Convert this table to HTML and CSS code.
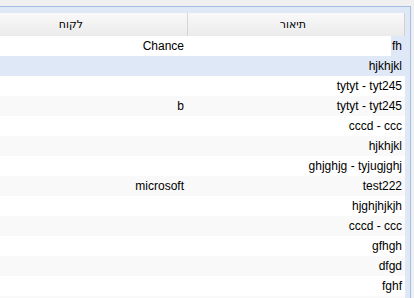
FILE: index.html
```html
<!DOCTYPE html>
<html lang="he">
<head>
<meta charset="utf-8">
<link rel="stylesheet" href="styles.css">
</head>
<body>
<div class="panel">
  <div class="grid" dir="rtl">
    <div class="hcell hdesc">תיאור</div>
    <div class="hcell hcust">לקוח</div>

    <div class="row">
      <div class="cell desc focus"><span class="focus-text">fh</span></div>
      <div class="cell cust">Chance</div>
    </div>
    <div class="row selected">
      <div class="cell desc">hjkhjkl</div>
      <div class="cell cust"></div>
    </div>
    <div class="row">
      <div class="cell desc">tytyt - tyt245</div>
      <div class="cell cust"></div>
    </div>
    <div class="row alt">
      <div class="cell desc">tytyt - tyt245</div>
      <div class="cell cust">b</div>
    </div>
    <div class="row">
      <div class="cell desc">cccd - ccc</div>
      <div class="cell cust"></div>
    </div>
    <div class="row alt">
      <div class="cell desc">hjkhjkl</div>
      <div class="cell cust"></div>
    </div>
    <div class="row">
      <div class="cell desc">ghjghjg - tyjugjghj</div>
      <div class="cell cust"></div>
    </div>
    <div class="row alt">
      <div class="cell desc">test222</div>
      <div class="cell cust">microsoft</div>
    </div>
    <div class="row">
      <div class="cell desc">hjghjhjkjh</div>
      <div class="cell cust"></div>
    </div>
    <div class="row alt">
      <div class="cell desc">cccd - ccc</div>
      <div class="cell cust"></div>
    </div>
    <div class="row">
      <div class="cell desc">gfhgh</div>
      <div class="cell cust"></div>
    </div>
    <div class="row alt">
      <div class="cell desc">dfgd</div>
      <div class="cell cust"></div>
    </div>
    <div class="row">
      <div class="cell desc">fghf</div>
      <div class="cell cust"></div>
    </div>
    <div class="row alt">
      <div class="cell desc"></div>
      <div class="cell cust"></div>
    </div>
  </div>
</div>
</body>
</html>
```

FILE: styles.css
```css
html, body {
  margin: 0;
  padding: 0;
}
body {
  background: #f0f0f0;
  padding: 6px 3px 0 0;
  height: 298px;
  box-sizing: border-box;
  overflow: hidden;
  font-family: "Liberation Sans", Arial, sans-serif;
  font-size: 12px;
  color: #000;
}
.panel {
  background: #dfe8f6;
  border-top: 1px solid #a3bde3;
  border-right: 1px solid #a3bde3;
  padding: 6px 5px 0 0;
  height: 292px;
  box-sizing: border-box;
  overflow: hidden;
}
.grid {
  display: grid;
  grid-template-columns: 217px 188px;
  width: 405px;
}
.hcell {
  height: 23px;
  line-height: 23px;
  background: linear-gradient(#f9f9f9, #ebebeb);
  text-align: right;
  color: #000;
  box-sizing: border-box;
  font-family: "DejaVu Sans", sans-serif;
  font-size: 11px;
}
.hdesc {
  border-right: 1px solid #d0d0d0;
  padding-right: 98px;
}
.hcust {
  border-right: 1px solid #d5d5d5;
  padding-right: 104px;
}
.row {
  display: contents;
}
.cell {
  height: 20px;
  line-height: 20px;
  background: #fff;
  text-align: right;
  white-space: nowrap;
  overflow: hidden;
}
.row.alt .cell {
  background: #f9f9f9;
}
.row.selected .cell {
  background: #dfe8f6;
}
.desc {
  padding-right: 3px;
}
.cust {
  padding-right: 4px;
}
.desc.focus {
  padding-right: 0;
}
.focus-text {
  display: inline-block;
  height: 20px;
  background: #dfe8f6;
  padding: 0 3px 0 1px;
}
```
